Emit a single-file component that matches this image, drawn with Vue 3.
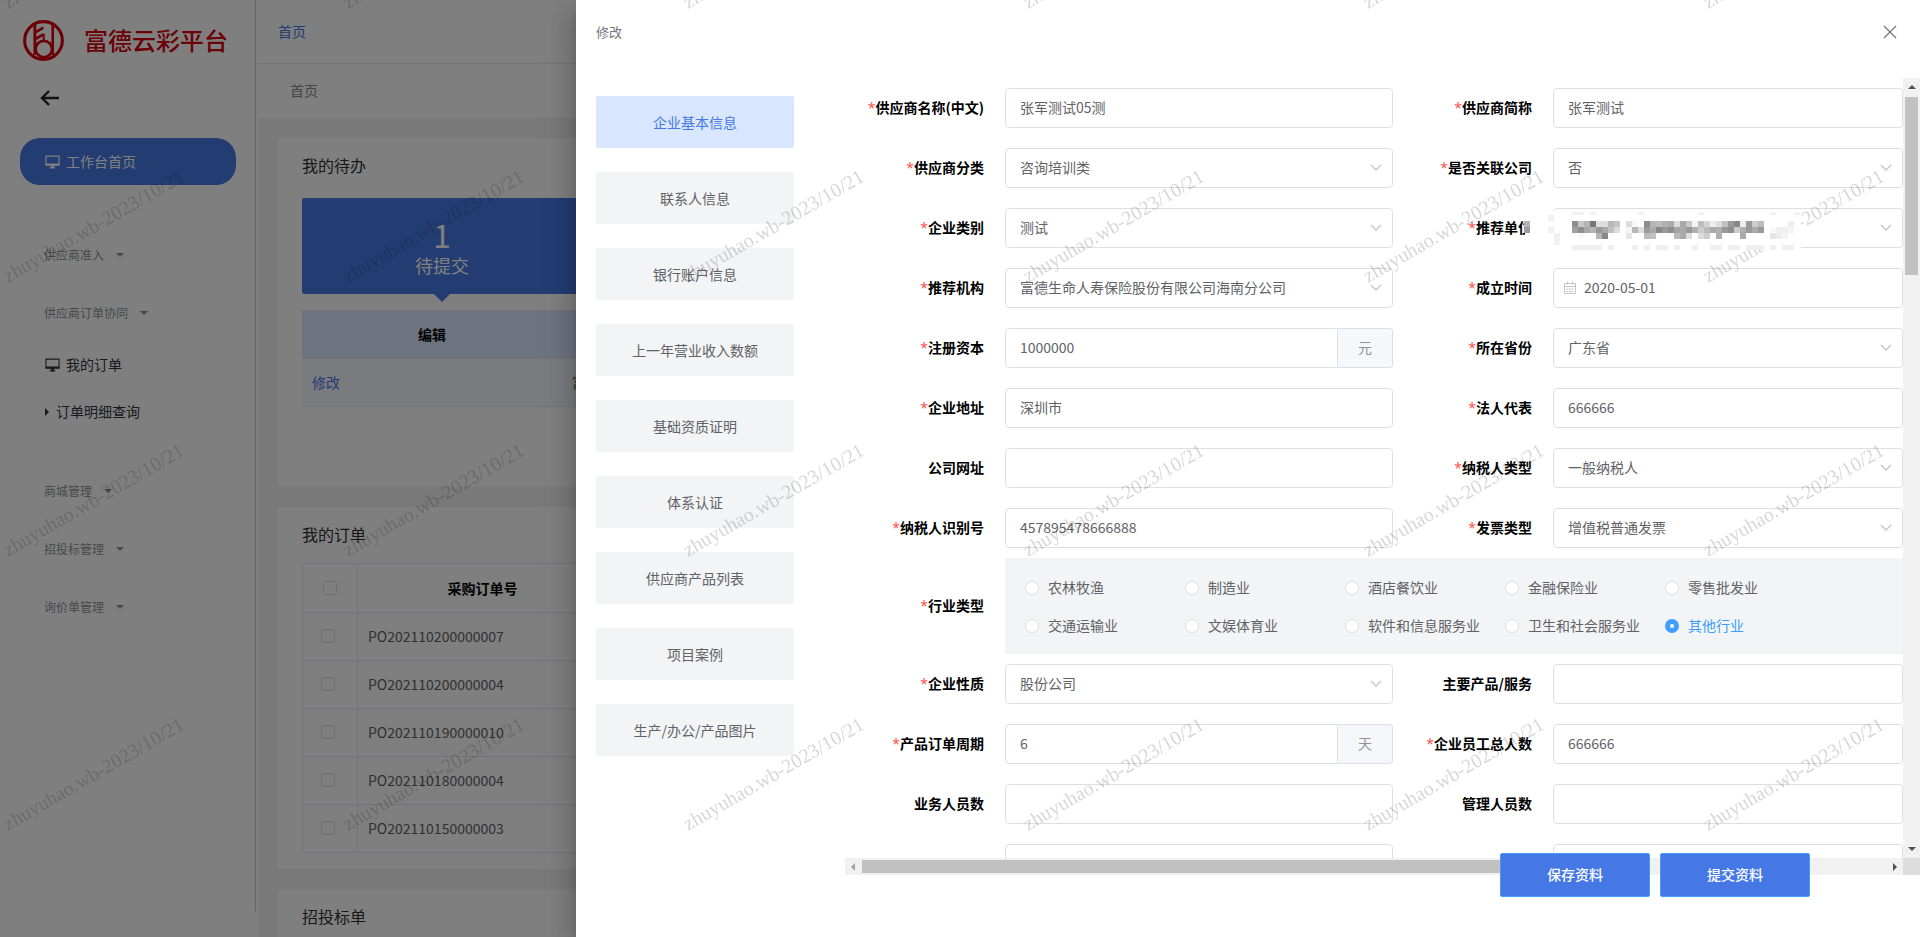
<script setup>
import { ref } from 'vue'

const navGroups = [
  { title: '供应商准入', items: [] },
  {
    title: '供应商订单协同',
    items: [
      { text: '我的订单', icon: 'monitor' },
      { text: '订单明细查询', icon: 'caret' },
    ],
  },
  { title: '商城管理', items: [] },
  { title: '招投标管理', items: [] },
  { title: '询价单管理', items: [] },
]

const orders = [
  'PO202110200000007',
  'PO202110200000004',
  'PO202110190000010',
  'PO202110180000004',
  'PO202110150000003',
]

const tabs = [
  '企业基本信息',
  '联系人信息',
  '银行账户信息',
  '上一年营业收入数额',
  '基础资质证明',
  '体系认证',
  '供应商产品列表',
  '项目案例',
  '生产/办公/产品图片',
]
const activeTab = ref(0)

const fieldsTop = ref([
  { id: 'name', label: '供应商名称(中文)', required: true, type: 'text', value: '张军测试05测' },
  { id: 'short', label: '供应商简称', required: true, type: 'text', value: '张军测试' },
  { id: 'class', label: '供应商分类', required: true, type: 'select', value: '咨询培训类' },
  { id: 'related', label: '是否关联公司', required: true, type: 'select', value: '否' },
  { id: 'kind', label: '企业类别', required: true, type: 'select', value: '测试' },
  { id: 'unit', label: '推荐单位', required: true, type: 'select', value: '', masked: true },
  { id: 'org', label: '推荐机构', required: true, type: 'select', value: '富德生命人寿保险股份有限公司海南分公司' },
  { id: 'founded', label: '成立时间', required: true, type: 'date', value: '2020-05-01' },
  { id: 'capital', label: '注册资本', required: true, type: 'text', value: '1000000', unit: '元' },
  { id: 'province', label: '所在省份', required: true, type: 'select', value: '广东省' },
  { id: 'address', label: '企业地址', required: true, type: 'text', value: '深圳市' },
  { id: 'legal', label: '法人代表', required: true, type: 'text', value: '666666' },
  { id: 'site', label: '公司网址', type: 'text', value: '' },
  { id: 'taxtype', label: '纳税人类型', required: true, type: 'select', value: '一般纳税人' },
  { id: 'taxno', label: '纳税人识别号', required: true, type: 'text', value: '457895478666888' },
  { id: 'invoice', label: '发票类型', required: true, type: 'select', value: '增值税普通发票' },
])

const fieldsBottom = ref([
  { id: 'nature', label: '企业性质', required: true, type: 'select', value: '股份公司' },
  { id: 'products', label: '主要产品/服务', type: 'text', value: '' },
  { id: 'cycle', label: '产品订单周期', required: true, type: 'text', value: '6', unit: '天' },
  { id: 'staff', label: '企业员工总人数', required: true, type: 'text', value: '666666' },
  { id: 'sales', label: '业务人员数', type: 'text', value: '' },
  { id: 'managers', label: '管理人员数', type: 'text', value: '' },
  { id: 'extra1', label: '', type: 'text', value: '' },
  { id: 'extra2', label: '', type: 'text', value: '' },
])

const industries = [
  '农林牧渔', '制造业', '酒店餐饮业', '金融保险业', '零售批发业',
  '交通运输业', '文娱体育业', '软件和信息服务业', '卫生和社会服务业', '其他行业',
]
const industry = ref('其他行业')

// Grey levels of the masked value: one entry per 6px cell, "--" is blank.
const maskRows = [
  '8f c8 b5 77 e0 dd b8 c4 -- dd f8 -- 8d b5 bb b0 aa dc a8 c8 f5 bd d5 ee dd c0 99 88 ee 99 cc bb -- -- -- -- ee',
  'a0 8f a8 b5 99 aa c0 dd -- f5 b8 dd 99 aa 88 99 8f a5 aa 99 b0 cc bb aa b0 99 8f cc b0 99 aa 99 -- f8 ee f0 f5',
  '-- f8 -- -- b5 88 -- -- -- e5 -- -- bb c0 -- -- -- bb aa dd -- dd cc -- b0 -- -- -- aa -- -- -- -- e5 ee f5 --',
]
const maskCells = maskRows.flatMap((row, r) =>
  row.split(' ').flatMap((v, c) => (v === '--' ? [] : [{ x: 52 + c * 6, y: 13 + r * 6, fill: `#${v}${v}${v}` }]))
)
const maskTop = [[52, 12], [70, 6], [118, 6], [178, 6], [250, 6], [274, 6]]
const maskBottom = [[52, 30], [88, 6], [112, 6], [124, 6], [136, 12], [154, 6], [172, 6], [190, 12], [208, 12], [226, 18], [250, 6], [262, 12]]

const sections = [fieldsTop, fieldsBottom]
</script>

<template>
  <div class="app">
    <div class="layout">
      <aside class="sidebar">
        <div class="brand">
          <svg class="logo" viewBox="0 0 40 40" aria-hidden="true">
            <g fill="none" stroke="#d9000f">
              <circle cx="20" cy="20" r="18.4" stroke-width="3" />
              <path d="M11.600 5v29" stroke-width="2.800" />
              <path d="M29 5v29" stroke-width="2.600" />
              <path d="M12.500 11.800l7.500-4.300M12.500 18.300l7.500-4.300" stroke-width="2.600" />
              <path d="M20.200 13.500v6.500" stroke-width="2" />
              <circle cx="20.300" cy="28.300" r="8" stroke-width="2.600" />
            </g>
          </svg>
          <h1 class="brand-name">富德云彩平台</h1>
        </div>
        <button class="back" type="button" aria-label="返回">
          <svg viewBox="0 0 20 18" width="20" height="18" aria-hidden="true">
            <path d="M9 2 2 9l7 7M2.500 9H19" fill="none" stroke="#222" stroke-width="2.400" />
          </svg>
        </button>
        <nav>
          <a class="nav-item active" href="#">
            <svg class="monitor" viewBox="0 0 16 14" aria-hidden="true">
              <path d="M1 .7h14v9.600H1z" fill="none" stroke="currentColor" stroke-width="1.200" />
              <path d="M1 8.500h14v2H1zM6.500 10.500h3v2h1.500v1.500H5v-1.500h1.500z" fill="currentColor" />
            </svg>
            <span>工作台首页</span>
          </a>
          <section v-for="g in navGroups" :key="g.title" class="nav-group">
            <button class="nav-title" type="button">{{ g.title }}<i class="caret-down"></i></button>
            <div v-if="g.items.length" class="nav-sub">
              <a v-for="it in g.items" :key="it.text" class="nav-item" href="#">
                <svg v-if="it.icon === 'monitor'" class="monitor" viewBox="0 0 16 14" aria-hidden="true">
                  <path d="M1 .7h14v9.600H1z" fill="none" stroke="currentColor" stroke-width="1.200" />
                  <path d="M1 8.500h14v2H1zM6.500 10.500h3v2h1.500v1.500H5v-1.500h1.500z" fill="currentColor" />
                </svg>
                <i v-else class="caret-right"></i>
                <span>{{ it.text }}</span>
              </a>
            </div>
          </section>
        </nav>
      </aside>

      <main class="main">
        <div class="topbar"><a href="#">首页</a></div>
        <div class="crumb">首页</div>
        <div class="cards">
          <section class="card todo">
            <h2>我的待办</h2>
            <div class="stats">
              <div class="stat"><b>1</b><span>待提交</span></div>
            </div>
            <table class="todo-table">
              <thead><tr><th class="c1">编辑</th><th></th></tr></thead>
              <tbody><tr><td><a href="#">修改</a></td><td>富德生命人寿</td></tr></tbody>
            </table>
          </section>
          <section class="card">
            <h2>我的订单</h2>
            <table class="order-table">
              <thead>
                <tr>
                  <th class="ck"><input type="checkbox" aria-label="全选" /></th>
                  <th class="no">采购订单号</th>
                  <th></th>
                </tr>
              </thead>
              <tbody>
                <tr v-for="o in orders" :key="o">
                  <td class="ck"><input type="checkbox" :aria-label="o" /></td>
                  <td>{{ o }}</td>
                  <td></td>
                </tr>
              </tbody>
            </table>
          </section>
          <section class="card"><h2>招投标单</h2></section>
        </div>
      </main>
    </div>

    <div class="mask"></div>

    <div class="drawer" role="dialog" aria-label="修改">
      <header class="drawer-head">
        <span>修改</span>
        <button type="button" aria-label="关闭">
          <svg viewBox="0 0 14 14" width="14" height="14" aria-hidden="true">
            <path d="M1 1l12 12M13 1 1 13" fill="none" stroke="#72767b" stroke-width="1.300" />
          </svg>
        </button>
      </header>
      <div class="drawer-body">
        <div class="tabs">
          <button
            v-for="(t, i) in tabs"
            :key="t"
            type="button"
            class="tab"
            :class="{ on: i === activeTab }"
            @click="activeTab = i"
          >{{ t }}</button>
        </div>
        <div class="pane">
          <form class="form" @submit.prevent>
            <template v-for="(list, s) in sections" :key="s">
              <div v-if="s === 1" class="item wide">
                <span id="industry-label" class="label"><i>*</i>行业类型</span>
                <div class="radios" role="radiogroup" aria-labelledby="industry-label">
                  <label v-for="n in industries" :key="n" class="radio" :class="{ on: n === industry }">
                    <input v-model="industry" type="radio" name="industry" :value="n" /><span>{{ n }}</span>
                  </label>
                </div>
              </div>
              <div v-for="f in list.value" :key="f.id" class="item">
                <label class="label" :for="f.id"><i v-if="f.required">*</i>{{ f.label }}</label>
                <div class="control">
                  <template v-if="f.type === 'select'">
                    <select :id="f.id" v-model="f.value"><option :value="f.value">{{ f.value }}</option></select>
                    <svg class="chevron" viewBox="0 0 12 8" aria-hidden="true">
                      <path d="M1 1l5 5 5-5" fill="none" stroke="#c0c4cc" stroke-width="1.300" />
                    </svg>
                  </template>
                  <template v-else-if="f.type === 'date'">
                    <svg class="calendar" viewBox="0 0 14 14" aria-hidden="true">
                      <path d="M1.500 2.500h11v10h-11zM1.500 5.500h11M4.500 .5v3M9.500 .5v3" fill="none" stroke="#c0c4cc" />
                      <path d="M3.500 8h7M3.500 10.500h7" fill="none" stroke="#c0c4cc" stroke-dasharray="2 .5" />
                    </svg>
                    <input :id="f.id" v-model="f.value" class="dated" type="text" />
                  </template>
                  <template v-else>
                    <input :id="f.id" v-model="f.value" type="text" :class="{ joined: f.unit }" />
                    <span v-if="f.unit" class="unit">{{ f.unit }}</span>
                  </template>
                  <svg v-if="f.masked" class="mosaic" viewBox="0 0 284 44" aria-hidden="true">
                    <path d="M5 8h23v24H5zM28 3h253v39H28z" fill="#fff" />
                    <path d="M4 13h6v6H4z" fill="#b4b4b6" />
                    <path d="M4 19h6v6H4z" fill="#9c9c9f" />
                    <path d="M28 7h6v6h-6zM28 19h6v6h-6zM34 25h6v12h-6z" fill="#f1f1f3" />
                    <rect v-for="c in maskCells" :key="c.x + '-' + c.y" :x="c.x" :y="c.y" width="6" height="6" :fill="c.fill" />
                    <rect v-for="m in maskTop" :key="'t' + m[0]" :x="m[0]" y="4" :width="m[1]" height="3" fill="#f1f1f3" />
                    <rect v-for="m in maskBottom" :key="'b' + m[0]" :x="m[0]" y="37" :width="m[1]" height="5" fill="#efeff2" />
                  </svg>
                </div>
              </div>
            </template>
          </form>
          <div class="vbar">
            <i class="arrow up"></i><span class="vthumb"></span><i class="arrow down"></i>
          </div>
          <div class="hbar">
            <i class="arrow left"></i><span class="hthumb"></span><i class="arrow right"></i>
          </div>
          <div class="corner"></div>
        </div>
      </div>
      <div class="actions">
        <button type="button">保存资料</button>
        <button type="button">提交资料</button>
      </div>
    </div>

    <svg class="watermark" aria-hidden="true">
      <defs>
        <pattern id="wm" width="340" height="274" patternUnits="userSpaceOnUse">
          <g class="wm-text">
            <text transform="translate(8 283) rotate(-30)">zhuyuhao.wb-2023/10/21</text>
            <text transform="translate(8 9) rotate(-30)">zhuyuhao.wb-2023/10/21</text>
          </g>
        </pattern>
      </defs>
      <rect width="100%" height="100%" fill="url(#wm)" />
    </svg>
  </div>
</template>

<style>
body {
  background: #fff;
}
</style>

<style scoped>
* {
  box-sizing: border-box;
}
.app {
  position: relative;
  height: 100vh;
  overflow: hidden;
  font: 14px/20px "Noto Sans CJK SC", sans-serif;
  color: #606266;
}
a {
  color: #4678e5;
  text-decoration: none;
}
button,
input,
select {
  font: inherit;
  color: inherit;
}
button {
  border: 0;
  background: none;
  padding: 0;
}
h1,
h2 {
  margin: 0;
}
.layout {
  display: flex;
  gap: 2px;
  height: 100%;
}
.sidebar {
  flex: none;
  width: 256px;
  margin-bottom: 26px;
  border-right: 1px solid #c8c8cc;
}
.brand {
  display: flex;
  align-items: center;
  gap: 20px;
  padding: 20px 0 0 23px;
}
.logo {
  width: 41px;
  height: 41px;
}
.brand-name {
  padding-bottom: 2px;
  font-size: 24px;
  line-height: 39px;
  font-weight: 500;
  color: #d9000f;
}
.back {
  display: block;
  margin: 28px 0 31px 40px;
  height: 18px;
}
.back svg {
  display: block;
}
.nav-item {
  display: flex;
  align-items: center;
  height: 47px;
  margin: 0 19px 0 20px;
  padding-left: 25px;
  color: #303540;
}
.nav-item span {
  padding-bottom: 2px;
}
.nav-item.active {
  border-radius: 20px;
  background: #4678e5;
  color: #fff;
  margin-bottom: 41px;
}
.monitor {
  width: 15px;
  height: 14px;
  margin-right: 6px;
}
.nav-title {
  display: flex;
  align-items: center;
  height: 58px;
  padding-left: 44px;
  font-size: 12px;
  color: #909399;
}
.nav-sub {
  margin-top: -1px;
  padding-bottom: 27px;
}
.caret-down {
  margin-left: 12px;
  border: 4px solid transparent;
  border-top-color: currentColor;
  border-bottom: 0;
}
.caret-right {
  margin-right: 7px;
  border: 4px solid transparent;
  border-left-color: currentColor;
  border-right: 0;
}
.main {
  flex: 1;
  min-width: 0;
  background: #f2f2f2;
}
.topbar {
  height: 64px;
  padding: 21px 20px;
  border-bottom: 1px solid #ebebeb;
  background: #fff;
}
.crumb {
  height: 54px;
  padding: 16px 32px;
  background: #fff;
  color: #8a8c90;
}
.cards {
  display: flex;
  flex-direction: column;
  gap: 20px;
  padding: 20px;
}
.card {
  padding: 15px 24px 16px;
  background: #fff;
}
.card h2 {
  padding-bottom: 1px;
  font-size: 16px;
  line-height: 24px;
  font-weight: 400;
  color: #303133;
}
.todo {
  padding-bottom: 80px;
}
.stats {
  display: flex;
  margin: 20px 0 16px;
}
.stat {
  position: relative;
  display: flex;
  flex-direction: column;
  align-items: center;
  width: 280px;
  height: 96px;
  padding-top: 19px;
  border-radius: 2px 0 0 2px;
  background: #4678e5;
  color: #fff;
}
.stat::after {
  content: '';
  position: absolute;
  top: 100%;
  border: 8px solid transparent;
  border-top-color: #4678e5;
  border-bottom: 0;
}
.stat b {
  font-size: 32px;
  line-height: 34px;
  font-weight: 400;
}
.stat span {
  font-size: 18px;
  line-height: 28px;
}
table {
  width: 100%;
  border-spacing: 0;
  table-layout: fixed;
}
th {
  height: 48px;
  padding: 0 10px;
  color: #000;
  font-weight: 700;
}
td {
  height: 48px;
  padding: 0 10px 1px;
}
.todo-table th {
  background: #dae6ff;
}
.todo-table td {
  height: 49px;
  padding-bottom: 2px;
  background: #f4f6fc;
  border-top: 1px solid #e6e9f2;
  border-bottom: 1px solid #e6e9f2;
}
.todo-table .c1 {
  width: 260px;
}
.order-table {
  margin: 16px 0 0;
  border-top: 1px solid #e6e9f2;
  border-left: 1px solid #e6e9f2;
}
.order-table th,
.order-table td {
  border-right: 1px solid #e6e9f2;
  border-bottom: 1px solid #e6e9f2;
}
.order-table th {
  height: 49px;
}
.order-table .ck {
  width: 55px;
  text-align: center;
}
.order-table td.ck {
  padding-right: 14px;
}
.order-table .no {
  width: 250px;
}
input[type='checkbox'] {
  appearance: none;
  display: block;
  width: 14px;
  height: 14px;
  margin: 0 auto;
  border: 1px solid #dcdfe6;
  border-radius: 2px;
  background: #fff;
}
.mask {
  position: absolute;
  inset: 0;
  background: rgba(0, 0, 0, 0.5);
}
.drawer {
  position: absolute;
  top: 0;
  right: 0;
  bottom: 0;
  width: 70%;
  display: flex;
  flex-direction: column;
  background: #fff;
  box-shadow: 0 8px 10px -5px rgba(0, 0, 0, 0.2), 0 16px 24px 2px rgba(0, 0, 0, 0.14), 0 6px 30px 5px rgba(0, 0, 0, 0.12);
}
.drawer-head {
  display: flex;
  justify-content: space-between;
  align-items: center;
  flex: none;
  height: 78px;
  padding: 0 23px 14px 20px;
  font-size: 13px;
  color: #72767b;
}
.drawer-head svg {
  display: block;
}
.drawer-body {
  flex: 1;
  min-height: 0;
  display: flex;
  padding: 0 0 62px 20px;
}
.tabs {
  flex: none;
  display: flex;
  flex-direction: column;
  gap: 24px;
  width: 198px;
  margin-right: 51px;
  padding-top: 18px;
}
.tab {
  flex: none;
  height: 52px;
  border-radius: 2px;
  background: #f2f4f6;
}
.tab.on {
  background: #d9e6ff;
  color: #4678e5;
}
.pane {
  flex: 1;
  min-width: 0;
  display: grid;
  grid-template-columns: minmax(0, 1fr) 17px;
  grid-template-rows: minmax(0, 1fr) 17px;
}
.form {
  display: grid;
  grid-template-columns: 548fr 510fr;
  align-content: start;
  overflow: hidden;
}
.item {
  display: flex;
  align-items: center;
  gap: 20px;
  height: 60px;
  min-width: 0;
}
.item.wide {
  grid-column: 1 / -1;
  height: 96px;
}
.label {
  flex: none;
  width: 140px;
  padding: 0 1px 2px 0;
  text-align: right;
  font-weight: 700;
  color: #000;
}
.label i {
  font-family: "Open Sans", sans-serif;
  font-style: normal;
  font-weight: 400;
  color: #ff4949;
}
.control {
  position: relative;
  flex: 1;
  min-width: 0;
  display: flex;
  height: 40px;
}
.control input,
.control select {
  appearance: none;
  flex: 1;
  min-width: 0;
  height: 40px;
  padding: 0 14px 2px;
  border: 1px solid #dcdfe6;
  border-radius: 4px;
  background: #fff;
  outline: 0;
}
.control .dated {
  padding-left: 30px;
}
.control .joined {
  border-radius: 4px 0 0 4px;
}
.unit {
  width: 55px;
  border: 1px solid #dcdfe6;
  border-left: 0;
  border-radius: 0 4px 4px 0;
  background: #f5f7fa;
  color: #909399;
  line-height: 36px;
  text-align: center;
}
.chevron {
  position: absolute;
  right: 11px;
  top: 16px;
  width: 12px;
  height: 8px;
}
.calendar {
  position: absolute;
  left: 10px;
  top: 13px;
  width: 14px;
  height: 14px;
}
.mosaic {
  position: absolute;
  left: -33px;
  top: 0;
  z-index: 6;
  width: 284px;
  height: 44px;
}
.radios {
  flex: 1;
  display: grid;
  grid-template-columns: repeat(5, 160px);
  grid-auto-rows: 38px;
  height: 96px;
  padding: 11px 20px 9px;
  background: #f2f4f6;
}
.radio {
  display: flex;
  align-items: center;
  gap: 9px;
  white-space: nowrap;
}
.radio span {
  padding-bottom: 2px;
}
.radio.on {
  color: #409eff;
}
.radio input {
  appearance: none;
  flex: none;
  width: 14px;
  height: 14px;
  margin: 0;
  border: 1px solid #dcdfe6;
  border-radius: 50%;
  background: #fff;
}
.radio input:checked {
  border: 5px solid #409eff;
}
.vbar,
.hbar {
  display: flex;
  align-items: center;
  justify-content: space-between;
  background: #f1f1f1;
}
.vbar {
  flex-direction: column;
  padding: 7px 0;
}
.hbar {
  padding: 0 6px;
}
.corner {
  background: #dcdcdc;
}
.vthumb {
  width: 13px;
  height: 178px;
  margin: 8px 0 auto;
  background: #c1c1c1;
}
.hthumb {
  width: 68%;
  height: 13px;
  margin: 0 auto 0 7px;
  background: #c1c1c1;
}
.arrow {
  border: 4px solid transparent;
}
.up {
  border-top: 0;
  border-bottom-color: #505050;
}
.down {
  border-bottom: 0;
  border-top-color: #505050;
}
.left {
  border-left: 0;
  border-right-color: #a3a3a3;
}
.right {
  border-right: 0;
  border-left-color: #505050;
}
.actions {
  position: absolute;
  right: 110px;
  bottom: 40px;
  display: flex;
  gap: 10px;
}
.actions button {
  width: 150px;
  height: 44px;
  padding-bottom: 2px;
  border: 1px solid #409eff;
  border-radius: 2px;
  background: #4678e5;
  color: #fff;
  font-weight: 500;
}
.watermark {
  position: absolute;
  inset: 0;
  z-index: 5;
  width: 100%;
  height: 100%;
  pointer-events: none;
}
.wm-text {
  font: 20px "Liberation Serif", serif;
  fill: rgba(0, 0, 0, 0.16);
}
</style>
